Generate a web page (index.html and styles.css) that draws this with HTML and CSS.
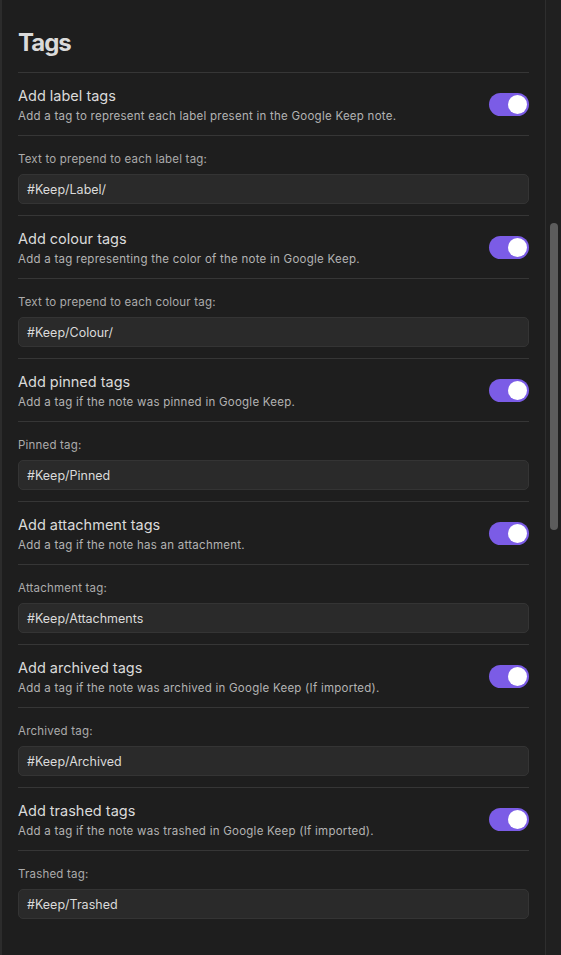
FILE: index.html
```html
<!DOCTYPE html>
<html lang="en">
<head>
<meta charset="utf-8">
<title>Tags settings</title>
<link rel="stylesheet" href="styles.css">
</head>
<body>
<div class="window">
  <main class="pane">
    <h2 class="heading">Tags</h2>

    <div class="setting">
      <div class="info">
        <div class="name">Add label tags</div>
        <div class="desc">Add a tag to represent each label present in the Google Keep note.</div>
      </div>
      <div class="toggle on"><span class="knob"></span></div>
    </div>
    <div class="field">
      <div class="label">Text to prepend to each label tag:</div>
      <div class="input">#Keep/Label/</div>
    </div>

    <div class="setting">
      <div class="info">
        <div class="name">Add colour tags</div>
        <div class="desc">Add a tag representing the color of the note in Google Keep.</div>
      </div>
      <div class="toggle on"><span class="knob"></span></div>
    </div>
    <div class="field">
      <div class="label">Text to prepend to each colour tag:</div>
      <div class="input">#Keep/Colour/</div>
    </div>

    <div class="setting">
      <div class="info">
        <div class="name">Add pinned tags</div>
        <div class="desc">Add a tag if the note was pinned in Google Keep.</div>
      </div>
      <div class="toggle on"><span class="knob"></span></div>
    </div>
    <div class="field">
      <div class="label">Pinned tag:</div>
      <div class="input">#Keep/Pinned</div>
    </div>

    <div class="setting">
      <div class="info">
        <div class="name">Add attachment tags</div>
        <div class="desc">Add a tag if the note has an attachment.</div>
      </div>
      <div class="toggle on"><span class="knob"></span></div>
    </div>
    <div class="field">
      <div class="label">Attachment tag:</div>
      <div class="input">#Keep/Attachments</div>
    </div>

    <div class="setting">
      <div class="info">
        <div class="name">Add archived tags</div>
        <div class="desc">Add a tag if the note was archived in Google Keep (If imported).</div>
      </div>
      <div class="toggle on"><span class="knob"></span></div>
    </div>
    <div class="field">
      <div class="label">Archived tag:</div>
      <div class="input">#Keep/Archived</div>
    </div>

    <div class="setting">
      <div class="info">
        <div class="name">Add trashed tags</div>
        <div class="desc">Add a tag if the note was trashed in Google Keep (If imported).</div>
      </div>
      <div class="toggle on"><span class="knob"></span></div>
    </div>
    <div class="field">
      <div class="label">Trashed tag:</div>
      <div class="input">#Keep/Trashed</div>
    </div>
  </main>
  <aside class="scrollbar">
    <div class="thumb"></div>
  </aside>
</div>
</body>
</html>
```

FILE: styles.css
```css
html, body {
  margin: 0;
  padding: 0;
  background: #1e1e1e;
  height: 100%;
  overflow: hidden;
}

body {
  font-family: Inter, "Noto Sans", "Liberation Sans", sans-serif;
  color: #dadada;
}

.window {
  display: flex;
  height: 955px;
}

.pane {
  flex: 1;
  border-left: 2px solid #2c2c2c;
  padding: 0 16px 0 16px;
}

.heading {
  margin: 0;
  padding: 28px 0 14px;
  font-size: 24px;
  line-height: 30px;
  font-weight: 700;
  letter-spacing: -1px;
  color: #dadada;
}

.setting {
  display: flex;
  align-items: center;
  justify-content: space-between;
  border-top: 1px solid #363636;
  padding: 13px 0 10px;
  gap: 16px;
}

.info {
  display: flex;
  flex-direction: column;
  gap: 2px;
}

.name {
  font-size: 14.5px;
  line-height: 20px;
  color: #dadada;
}

.desc {
  font-size: 11.5px;
  line-height: 17px;
  color: #b3b3b3;
  letter-spacing: 0.25px;
}

.toggle {
  flex: none;
  width: 40px;
  height: 23px;
  border-radius: 12px;
  background: #7b5ce6;
  display: flex;
  align-items: center;
  justify-content: flex-end;
  padding: 0 2px;
  box-sizing: border-box;
  margin-top: -3px;
}

.knob {
  width: 19px;
  height: 19px;
  border-radius: 50%;
  background: #ffffff;
}

.field {
  border-top: 1px solid #363636;
  padding: 15px 0 11px;
  display: flex;
  flex-direction: column;
  gap: 6px;
}

.label {
  font-size: 11.5px;
  line-height: 17px;
  color: #ababab;
  letter-spacing: 0.2px;
}

.input {
  height: 30px;
  box-sizing: border-box;
  border: 1px solid #343434;
  border-radius: 5px;
  background: #2a2a2a;
  padding: 0 8px;
  display: flex;
  align-items: center;
  font-size: 12.5px;
  color: #dadada;
}

.scrollbar {
  flex: none;
  width: 16px;
  border-left: 1px solid #2e2e2e;
  background: #202020;
  padding-top: 223px;
  box-sizing: border-box;
  display: flex;
  justify-content: center;
}

.thumb {
  width: 8px;
  height: 307px;
  border-radius: 4px;
  background: #5c5c5c;
}
```
